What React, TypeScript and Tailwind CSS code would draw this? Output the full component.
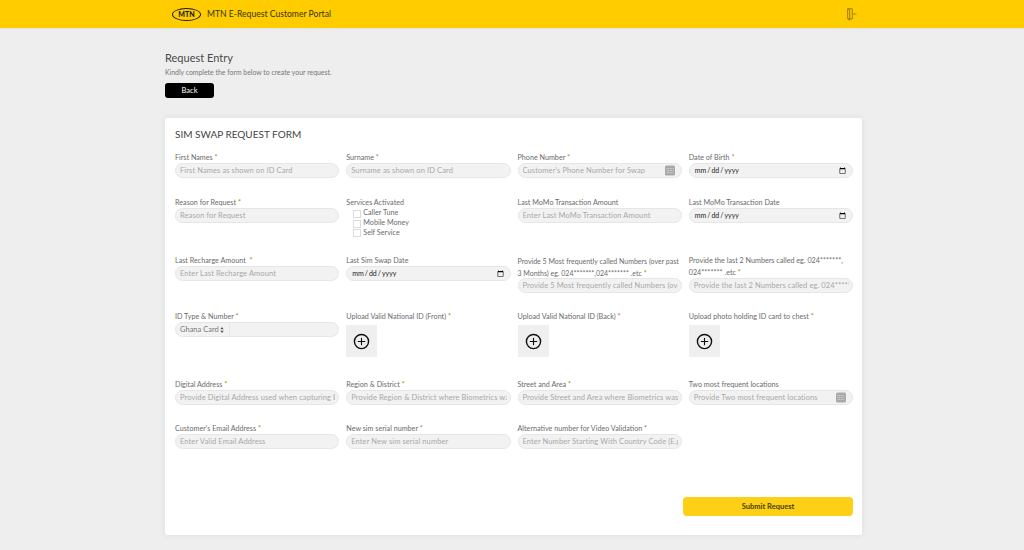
const fontStack = "font-['Lato','Noto_Sans',sans-serif]"

function Label({ text, required, gap, small }: { text: string; required?: boolean; gap?: boolean; small?: boolean }) {
  return (
    <label className={`block leading-[12px] text-[#6b6b6b] ${small ? "text-[7px]" : "text-[7.2px]"}`}>
      {text}
      {required && <span className="text-[#b8860b]">{gap ? "\u00a0\u00a0*" : " *"}</span>}
    </label>
  )
}

function KeyIcon() {
  return (
    <svg viewBox="0 0 10 10" className="absolute right-[7px] top-[2px] h-[11px] w-[10px]">
      <rect width="10" height="10" rx="1.5" fill="#a9a9a9" />
      <path d="M1.5 3h7M1.5 5h7M1.5 7h7" stroke="#dcdcdc" strokeWidth="0.8" strokeDasharray="1 0.6" />
    </svg>
  )
}

function TextField({ label, placeholder, required, icon, gap, small }: { label: string; placeholder: string; required?: boolean; icon?: boolean; gap?: boolean; small?: boolean }) {
  return (
    <div>
      <Label text={label} required={required} gap={gap} small={small} />
      <div className="relative -mt-[1px]">
        <input
          placeholder={placeholder}
          className={`block h-[15px] w-full rounded-full border border-[#e6e6e6] bg-[#f2f2f2] pl-[4px] text-[7.5px] tracking-[0.1px] text-[#555] outline-none placeholder:text-[#a8a8a8] ${icon ? "pr-[20px]" : "pr-[3px]"}`}
        />
        {icon && <KeyIcon />}
      </div>
    </div>
  )
}

function DateField({ label, required }: { label: string; required?: boolean }) {
  return (
    <div>
      <Label text={label} required={required} />
      <input
        type="date"
        className="-mt-[1px] block h-[15px] w-full rounded-full border border-[#e6e6e6] bg-[#f2f2f2] px-[4px] text-[7px] text-[#222] outline-none"
      />
    </div>
  )
}

function UploadField({ label }: { label: string }) {
  return (
    <div>
      <Label text={label} required />
      <div className="mt-[2px] flex h-[32px] w-[31px] items-center justify-center bg-[#efefef]">
        <svg viewBox="0 0 18 18" className="h-[17px] w-[17px]" fill="none" stroke="#111" strokeLinecap="round">
          <circle cx="9" cy="9" r="7.5" strokeWidth="1.5" />
          <path d="M9 5.5v7M5.5 9h7" strokeWidth="1.2" />
        </svg>
      </div>
    </div>
  )
}

function CheckItem({ text }: { text: string }) {
  return (
    <div className="flex h-[9.7px] items-center gap-[2px] pl-[7px]">
      <span className="h-[8px] w-[8px] border border-[#dcdcdc] bg-white" />
      <span className="text-[7.2px] text-[#6b6b6b]">{text}</span>
    </div>
  )
}

export default function App() {
  return (
    <div className={`${fontStack} h-[550px] overflow-hidden bg-[#eeeeee]`}>
      <header className="h-[28px] bg-[#ffcc00] shadow-[0_1px_2px_rgba(0,0,0,0.06)]">
        <div className="flex h-full items-center pl-[172px] pr-[167px]">
          <div className="flex h-[13px] w-[29px] items-center justify-center rounded-[50%] border-[1.5px] border-[#1a1a1a]">
            <span className="text-[7px] font-black leading-none text-[#1a1a1a]">MTN</span>
          </div>
          <span className="ml-[6px] text-[8.6px] text-[#3a3200]">MTN E-Request Customer Portal</span>
          <svg viewBox="0 0 10 13" className="ml-auto h-[13px] w-[10px]" fill="none" stroke="#9a7d00">
            <path d="M0.7 0.8h4.6v10H0.7zM0.7 0.8l2 1v10.4l-2-1.4" strokeWidth="1" />
            <path d="M6 6h3.4" strokeWidth="0.9" />
          </svg>
        </div>
      </header>

      <main className="ml-[165px] w-[697px] pt-[23px]">
        <h1 className="text-[11px] leading-[14px] text-[#4a4a4a]">Request Entry</h1>
        <p className="mt-[2px] text-[6.9px] leading-[10px] text-[#777]">Kindly complete the form below to create your request.</p>
        <button className="mt-[6px] block h-[15px] w-[49px] rounded-[3px] bg-black text-[7.5px] text-white">Back</button>

        <section className="mt-[20px] h-[417px] rounded-[3px] bg-white pl-[10px] pr-[9px] pt-[10px] shadow-[0_0_6px_rgba(0,0,0,0.08)]">
          <h2 className="text-[10px] leading-[13px] text-[#444]">SIM SWAP REQUEST FORM</h2>

          <div className="mt-[11px] grid grid-cols-4 grid-rows-[45px_58px_56px_68px_44px_28px] gap-x-[7px]">
            <TextField label="First Names" placeholder="First Names as shown on ID Card" required />
            <TextField label="Surname" placeholder="Surname as shown on ID Card" required />
            <TextField label="Phone Number" placeholder="Customer's Phone Number for Swap" required icon />
            <DateField label="Date of Birth" required />

            <TextField label="Reason for Request" placeholder="Reason for Request" required />
            <div>
              <Label text="Services Activated" />
              <CheckItem text="Caller Tune" />
              <CheckItem text="Mobile Money" />
              <CheckItem text="Self Service" />
            </div>
            <TextField label="Last MoMo Transaction Amount" placeholder="Enter Last MoMo Transaction Amount" />
            <DateField label="Last MoMo Transaction Date" />

            <TextField label="Last Recharge Amount" placeholder="Enter Last Recharge Amount" required gap />
            <DateField label="Last Sim Swap Date" />
            <TextField label="Provide 5 Most frequently called Numbers (over past 3 Months) eg. 024*******,024******* .etc" placeholder="Provide 5 Most frequently called Numbers (over past 3 Months)" required small />
            <TextField label="Provide the last 2 Numbers called eg. 024*******, 024******* .etc" placeholder="Provide the last 2 Numbers called eg. 024*******" required />

            <div>
              <Label text="ID Type & Number" required />
              <div className="-mt-[1px] flex h-[15px] items-center rounded-full border border-[#e6e6e6] bg-[#f2f2f2]">
                <span className="flex h-full w-[54px] shrink-0 items-center gap-[1px] border-r border-[#e6e6e6] pl-[4px] text-[7.5px] text-[#777]">
                  Ghana Card
                  <svg viewBox="0 0 4 7" className="h-[6px] w-[4px]" fill="#555">
                    <path d="M2 0l2 2.7H0zM2 7L0 4.3h4z" />
                  </svg>
                </span>
              </div>
            </div>
            <UploadField label="Upload Valid National ID (Front)" />
            <UploadField label="Upload Valid National ID (Back)" />
            <UploadField label="Upload photo holding ID card to chest" />

            <TextField label="Digital Address" placeholder="Provide Digital Address used when capturing Biometrics" required />
            <TextField label="Region & District" placeholder="Provide Region & District where Biometrics was captured" required />
            <TextField label="Street and Area" placeholder="Provide Street and Area where Biometrics was captured" required />
            <TextField label="Two most frequent locations" placeholder="Provide Two most frequent locations" icon />

            <TextField label="Customer's Email Address" placeholder="Enter Valid Email Address" required />
            <TextField label="New sim serial number" placeholder="Enter New sim serial number" required />
            <TextField label="Alternative number for Video Validation" placeholder="Enter Number Starting With Country Code (E.g 233...)" required />
          </div>

          <div className="mt-[46px] flex justify-end">
            <button className="h-[19px] w-[170px] rounded-[4px] bg-[#fdd017] text-[7.5px] font-bold text-[#4a3d00]">Submit Request</button>
          </div>
        </section>
      </main>
    </div>
  )
}
